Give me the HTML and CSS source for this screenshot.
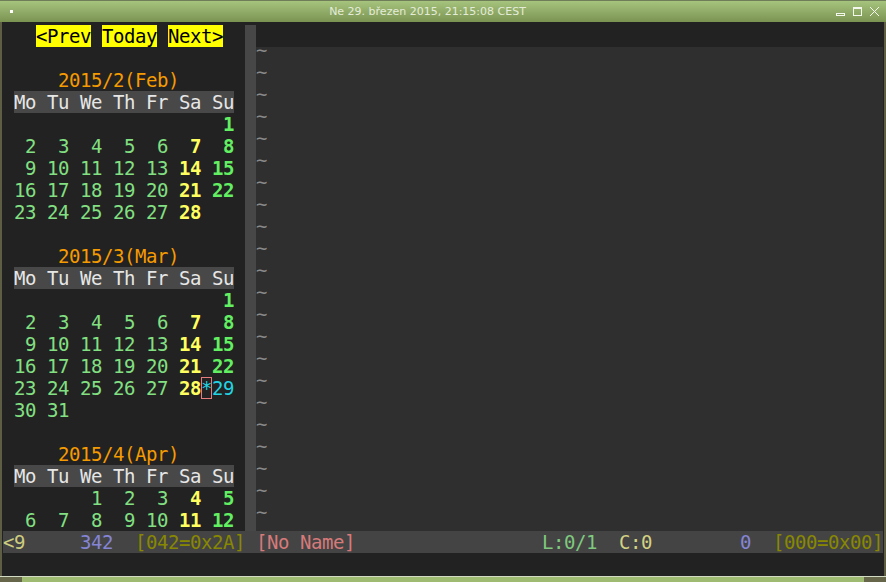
FILE: index.html
```html
<!DOCTYPE html>
<html>
<head>
<meta charset="utf-8">
<link rel="stylesheet" href="styles.css">
</head>
<body>
<div class="window">
  <div class="titlebar">
    <div class="tb-left"><span class="appicon"></span></div>
    <div class="tb-title">Ne 29. březen 2015, 21:15:08 CEST</div>
    <div class="tb-right">
      <svg width="55" height="22" viewBox="0 0 55 22">
        <rect x="5.5" y="13.5" width="8" height="2" fill="none" stroke="#f4f7ee" stroke-width="1"/>
        <rect x="22.5" y="7.5" width="8" height="8" fill="none" stroke="#f4f7ee" stroke-width="1"/>
        <line x1="22.5" y1="8.5" x2="30.5" y2="8.5" stroke="#f4f7ee" stroke-width="1"/>
        <line x1="39" y1="7" x2="48" y2="16" stroke="#f4f7ee" stroke-width="1"/>
        <line x1="48" y1="7" x2="39" y2="16" stroke="#f4f7ee" stroke-width="1"/>
      </svg>
    </div>
  </div>
  <div class="frame">
    <div class="term">
      <div class="panes">
        <div class="cal">
<div class="ln">   <span class="btn">&lt;Prev</span> <span class="btn">Today</span> <span class="btn">Next&gt;</span></div>
<div class="ln"></div>
<div class="ln">     <span class="ti">2015/2(Feb)</span></div>
<div class="ln"> <span class="hd">Mo Tu We Th Fr Sa Su</span></div>
<div class="ln">                    <span class="su">1</span></div>
<div class="ln"> <span class="d"> 2  3  4  5  6</span> <span class="sa"> 7</span> <span class="su"> 8</span></div>
<div class="ln"> <span class="d"> 9 10 11 12 13</span> <span class="sa">14</span> <span class="su">15</span></div>
<div class="ln"> <span class="d">16 17 18 19 20</span> <span class="sa">21</span> <span class="su">22</span></div>
<div class="ln"> <span class="d">23 24 25 26 27</span> <span class="sa">28</span></div>
<div class="ln"></div>
<div class="ln">     <span class="ti">2015/3(Mar)</span></div>
<div class="ln"> <span class="hd">Mo Tu We Th Fr Sa Su</span></div>
<div class="ln">                    <span class="su">1</span></div>
<div class="ln"> <span class="d"> 2  3  4  5  6</span> <span class="sa"> 7</span> <span class="su"> 8</span></div>
<div class="ln"> <span class="d"> 9 10 11 12 13</span> <span class="sa">14</span> <span class="su">15</span></div>
<div class="ln"> <span class="d">16 17 18 19 20</span> <span class="sa">21</span> <span class="su">22</span></div>
<div class="ln"> <span class="d">23 24 25 26 27</span> <span class="sa">28</span><span class="cur">*</span><span class="td">29</span></div>
<div class="ln"> <span class="d">30 31</span></div>
<div class="ln"></div>
<div class="ln">     <span class="ti">2015/4(Apr)</span></div>
<div class="ln"> <span class="hd">Mo Tu We Th Fr Sa Su</span></div>
<div class="ln"> <span class="d">       1  2  3</span> <span class="sa"> 4</span> <span class="su"> 5</span></div>
<div class="ln"> <span class="d"> 6  7  8  9 10</span> <span class="sa">11</span> <span class="su">12</span></div>
        </div>
        <div class="vsep"></div>
        <div class="editor">
          <div class="ln"></div>
          <div class="nontext">
            <div class="tl">~</div><div class="tl">~</div><div class="tl">~</div><div class="tl">~</div>
            <div class="tl">~</div><div class="tl">~</div><div class="tl">~</div><div class="tl">~</div>
            <div class="tl">~</div><div class="tl">~</div><div class="tl">~</div><div class="tl">~</div>
            <div class="tl">~</div><div class="tl">~</div><div class="tl">~</div><div class="tl">~</div>
            <div class="tl">~</div><div class="tl">~</div><div class="tl">~</div><div class="tl">~</div>
            <div class="tl">~</div><div class="tl">~</div>
          </div>
        </div>
      </div>
<div class="ln status"><span class="s1">&lt;9</span>     <span class="s2">342</span>  <span class="s3">[042=0x2A]</span> <span class="s4">[No Name]</span>                 <span class="s5">L:0/1</span>  <span class="s6">C:0</span>        <span class="s2">0</span>  <span class="s3">[000=0x00]</span></div>
      <div class="ln"></div>
    </div>
  </div>
  <div class="bottom">
    <div class="bcorner"></div>
    <div class="bmid"></div>
    <div class="bcorner"></div>
  </div>
</div>
</body>
</html>
```
FILE: styles.css
```css
html, body {
  margin: 0;
  padding: 0;
  background: #222222;
}
.window {
  width: 886px;
  height: 582px;
  display: flex;
  flex-direction: column;
  background: #222222;
  overflow: hidden;
}
.titlebar {
  height: 22px;
  flex: none;
  box-sizing: border-box;
  border-top: 1px solid #6f7e59;
  display: flex;
  align-items: center;
  background: linear-gradient(#a6c47e, #7b9351);
}
.tb-left {
  width: 24px;
  height: 21px;
  display: flex;
  align-items: flex-start;
}
.appicon {
  display: block;
  width: 3px;
  height: 3px;
  margin: 9px 0 0 10px;
  background: #ffffff;
}
.tb-title {
  flex: 1;
  text-align: center;
  font-family: "DejaVu Sans", sans-serif;
  font-size: 11px;
  color: #e4ecd9;
  line-height: 21px;
}
.tb-right {
  width: 55px;
  height: 21px;
}
.tb-right svg {
  display: block;
  margin-top: -1px;
}
.frame {
  flex: none;
  height: 554px;
  box-sizing: border-box;
  border-left: 2px solid #5e5e45;
  border-right: 2px solid #5e5e45;
  padding: 3px 1px 1px 1px;
  background: #222222;
}
.term {
  width: 880px;
  font-family: "DejaVu Sans Mono", monospace;
  font-size: 19px;
  letter-spacing: -0.44px;
  color: #d0d0d0;
}
.ln {
  height: 22px;
  line-height: 22px;
  white-space: pre;
  overflow: hidden;
}
.panes {
  display: flex;
}
.cal {
  width: 242px;
  flex: none;
}
.vsep {
  width: 11px;
  flex: none;
  background: #474747;
}
.editor {
  flex: 1;
}
.nontext {
  background: #2f2f2f;
}
.tl {
  height: 22px;
  line-height: 6px;
  white-space: pre;
  color: #8a8a8a;
}
.btn {
  background: #ffff00;
  color: #000000;
}
.ti {
  color: #f59b00;
}
.hd {
  background: #484848;
  color: #e6e6e6;
}
.d {
  color: #82e082;
}
.sa {
  color: #ffff60;
  font-weight: bold;
}
.su {
  color: #62f062;
  font-weight: bold;
}
.td {
  color: #22d3e3;
}
.cur {
  display: inline-block;
  width: 11px;
  height: 22px;
  box-sizing: border-box;
  box-shadow: inset 0 0 0 1px #e87b7b;
  color: #22d3e3;
}
.status {
  background: #444444;
}
.s1 { color: #cdcd80; }
.s2 { color: #8585d6; }
.s3 { color: #888800; }
.s4 { color: #d77a7a; }
.s5 { color: #7fc97f; }
.s6 { color: #d2d282; }
.bottom {
  flex: none;
  height: 6px;
  display: flex;
  border-top: 1px solid #d3dbc4;
}
.bcorner {
  width: 22px;
  background: #66664a;
}
.bmid {
  flex: 1;
  background: #9fbb72;
}
```
